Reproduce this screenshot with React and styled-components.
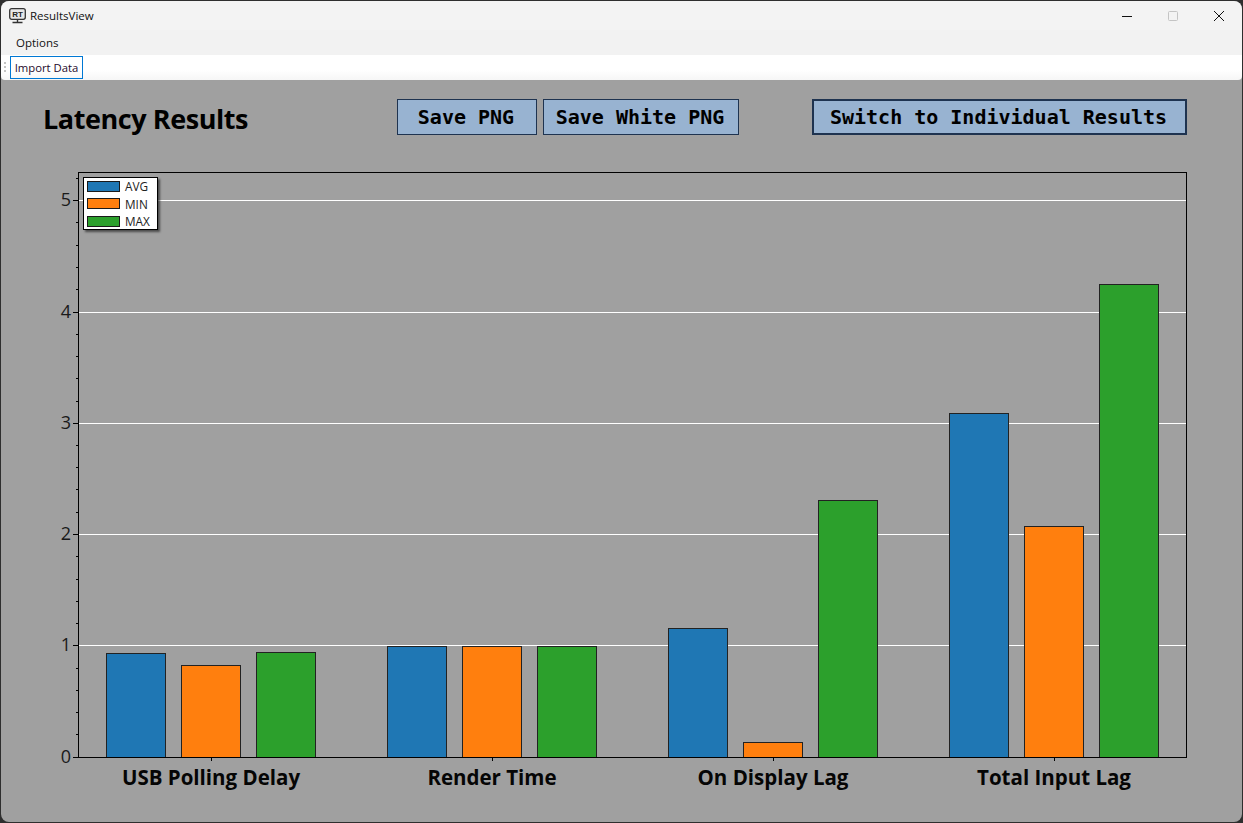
import React from "react";
import styled, {createGlobalStyle} from "styled-components";

const GlobalStyle = createGlobalStyle`
    html, body {
        margin: 0;
        padding: 0;
        background: #2e2e2e;
    }
    #root {
        width: 1243px;
        height: 823px;
        overflow: hidden;
    }
`;

const StyledWindow = styled.div`
    box-sizing: border-box;
    width: 1241px;
    height: 821px;
    margin: 1px 0 0 1px;
    display: flex;
    flex-direction: column;
    overflow: hidden;
    border-radius: 8px;
    background: #a0a0a0;
    font-family: "Open Sans", "Noto Sans", sans-serif;
`;
const StyledTitleBar = styled.div`
    flex: none;
    height: 29px;
    display: flex;
    align-items: center;
    padding-left: 8px;
    background: #f3f3f3;
    color: #111;
    font-size: 11.5px;
`;
const StyledAppName = styled.span`
    margin-left: 4px;
    flex: 1;
`;
const StyledWindowButton = styled.div`
    width: 46px;
    height: 29px;
    display: flex;
    align-items: center;
    justify-content: center;
`;
const StyledMenuBar = styled.div`
    flex: none;
    height: 25px;
    display: flex;
    align-items: center;
    padding-left: 15px;
    background: #f2f2f2;
    color: #111;
    font-size: 11.5px;
`;
const StyledToolBar = styled.div`
    flex: none;
    height: 25px;
    display: flex;
    align-items: center;
    gap: 4px;
    padding-left: 3px;
    background: linear-gradient(#ffffff 60%, #f6f6f6);
    border-radius: 0 0 4px 4px;
`;
const StyledGrip = styled.div`
    width: 2px;
    height: 12px;
    background: repeating-linear-gradient(#c4c4c4 0 2px, transparent 2px 4px);
`;
const StyledToolButton = styled.div`
    box-sizing: border-box;
    width: 73px;
    height: 23px;
    display: flex;
    align-items: center;
    justify-content: center;
    border: 1px solid #0078d4;
    color: #1e0a2c;
    font-size: 11.3px;
`;
const StyledContent = styled.div`
    flex: 1;
    display: flex;
    flex-direction: column;
    padding: 19px 55px 0 42px;
`;
const StyledHeader = styled.div`
    display: flex;
    align-items: center;
    height: 36px;
    gap: 6px;
`;
const StyledTitle = styled.h1`
    width: 348px;
    margin: 2px 0 0;
    color: #000;
    font-size: 27px;
    font-weight: 700;
    letter-spacing: -0.43px;
`;
const StyledButton = styled.button`
    box-sizing: border-box;
    width: ${(props) => props.$width}px;
    height: 36px;
    margin-left: ${(props) => (props.$push ? "auto" : "0")};
    padding: 0 2px 0 0;
    background: #98b3d1;
    border: ${(props) => (props.$strong ? 2 : 1)}px solid #1e3350;
    color: #000;
    font-family: "DejaVu Sans Mono", monospace;
    font-size: 20px;
    font-weight: 700;
`;
const StyledChart = styled.div`
    position: relative;
    margin: 30px 0 0 -2px;
    width: 1147px;
    height: 630px;
`;
const StyledChartSvg = styled.svg`
    display: block;
`;
const StyledAxisLabel = styled.text`
    font-family: "Open Sans", "Noto Sans", sans-serif;
    font-size: 18px;
    fill: #1a1a1a;
`;
const StyledCategoryLabel = styled.text`
    font-family: "Open Sans", "Noto Sans", sans-serif;
    font-size: 20.5px;
    font-weight: 700;
    fill: #050505;
`;
const StyledLegend = styled.div`
    position: absolute;
    left: 42px;
    top: 12px;
    box-sizing: border-box;
    width: 75px;
    height: 53px;
    display: flex;
    flex-direction: column;
    justify-content: space-between;
    padding: 1px 3px;
    background: #fff;
    border: 1px solid #000;
    box-shadow: 2px 2px 2px rgba(40, 40, 40, 0.7);
`;
const StyledLegendRow = styled.div`
    display: flex;
    align-items: center;
    gap: 5px;
    height: 14px;
    color: #222;
    font-size: 11.8px;
`;
const StyledSwatch = styled.div`
    box-sizing: border-box;
    width: 33px;
    height: 11px;
    background: ${(props) => props.$color};
    border: 1px solid #1a1a1a;
`;

const originX = 37;
const originY = 592;
const plotWidth = 1108;
const plotHeight = 585;
const unit = 111.25;

const series = [
    {name: "AVG", color: "#1f77b4"},
    {name: "MIN", color: "#ff7f0e"},
    {name: "MAX", color: "#2ca02c"}
];
const categories = [
    {name: "USB Polling Delay", values: [0.93, 0.822, 0.939]},
    {name: "Render Time", values: [0.993, 0.993, 0.993]},
    {name: "On Display Lag", values: [1.155, 0.13, 2.306]},
    {name: "Total Input Lag", values: [3.088, 2.072, 4.247]}
];
const minorTicks = Array.from({length: 27}, (_, index) => index * 0.2).filter((value) => value * unit < plotHeight);
const toY = (value) => Math.round(originY - 0.5 - value * unit);

function AppIcon() {
    return (
        <svg width="17" height="16" viewBox="0 0 17 16">
            <rect x="0.7" y="0.7" width="15.6" height="10.6" rx="2" fill="#e8e8e8" stroke="#333" strokeWidth="1.3"/>
            <text x="8.5" y="9" textAnchor="middle" fontFamily="Liberation Sans" fontSize="8" fontWeight="700" fill="#222">RT</text>
            <path d="M8.5 11.5v2.5M3.5 14.5h10" stroke="#333" strokeWidth="1.4" fill="none"/>
        </svg>
    );
}

function WindowControls() {
    return (
        <>
            <StyledWindowButton>
                <svg width="10" height="10" viewBox="0 0 10 10"><path d="M0 5.5h10" stroke="#111" strokeWidth="1"/></svg>
            </StyledWindowButton>
            <StyledWindowButton>
                <svg width="10" height="10" viewBox="0 0 10 10"><rect x="0.5" y="0.5" width="9" height="9" rx="1" fill="none" stroke="#c4c4c4"/></svg>
            </StyledWindowButton>
            <StyledWindowButton>
                <svg width="10" height="10" viewBox="0 0 10 10"><path d="M0 0l10 10M10 0L0 10" stroke="#111" strokeWidth="1"/></svg>
            </StyledWindowButton>
        </>
    );
}

function BarChart() {
    return (
        <StyledChartSvg width="1147" height="630" viewBox="0 0 1147 630">
            {[1, 2, 3, 4, 5].map((value) => (
                <line key={value} x1={originX} x2={originX + plotWidth} y1={toY(value) + 0.5} y2={toY(value) + 0.5} stroke="#fff"/>
            ))}
            {categories.map((category, categoryIndex) => category.values.map((value, seriesIndex) => {
                const top = toY(value);
                const x = originX + 28 + categoryIndex * 281 + seriesIndex * 75;
                return (
                    <rect key={`${category.name}-${seriesIndex}`} x={x + 0.5} y={top + 0.5} width={59} height={originY - top} fill={series[seriesIndex].color} stroke="#222"/>
                );
            }))}
            <rect x={originX + 0.5} y={originY - plotHeight + 0.5} width={plotWidth} height={plotHeight} fill="none" stroke="#000"/>
            {minorTicks.map((value, index) => (
                <line key={value} x1={originX - (index % 5 === 0 ? 5 : 2)} x2={originX} y1={toY(value) + 0.5} y2={toY(value) + 0.5} stroke="#000"/>
            ))}
            {[0, 1, 2, 3, 4, 5].map((value) => (
                <StyledAxisLabel key={value} x={originX - 7} y={toY(value) + 6} textAnchor="end">{value}</StyledAxisLabel>
            ))}
            {categories.map((category, categoryIndex) => {
                const center = originX + 133 + categoryIndex * 281;
                return (
                    <g key={category.name}>
                        <line x1={center + 0.5} x2={center + 0.5} y1={originY} y2={originY + 4} stroke="#000"/>
                        <StyledCategoryLabel x={center} y={originY + 28} textAnchor="middle">{category.name}</StyledCategoryLabel>
                    </g>
                );
            })}
        </StyledChartSvg>
    );
}

export default function App() {
    return (
        <>
            <GlobalStyle/>
            <StyledWindow>
                <StyledTitleBar>
                    <AppIcon/>
                    <StyledAppName>ResultsView</StyledAppName>
                    <WindowControls/>
                </StyledTitleBar>
                <StyledMenuBar>Options</StyledMenuBar>
                <StyledToolBar>
                    <StyledGrip/>
                    <StyledToolButton>Import Data</StyledToolButton>
                </StyledToolBar>
                <StyledContent>
                    <StyledHeader>
                        <StyledTitle>Latency Results</StyledTitle>
                        <StyledButton $width={140}>Save PNG</StyledButton>
                        <StyledButton $width={196}>Save White PNG</StyledButton>
                        <StyledButton $width={375} $strong $push>Switch to Individual Results</StyledButton>
                    </StyledHeader>
                    <StyledChart>
                        <BarChart/>
                        <StyledLegend>
                            {series.map((item) => (
                                <StyledLegendRow key={item.name}>
                                    <StyledSwatch $color={item.color}/>
                                    {item.name}
                                </StyledLegendRow>
                            ))}
                        </StyledLegend>
                    </StyledChart>
                </StyledContent>
            </StyledWindow>
        </>
    );
}
